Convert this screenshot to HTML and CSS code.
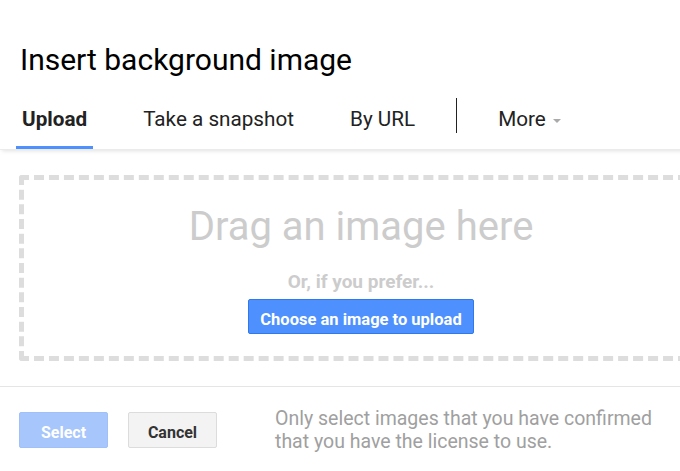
FILE: index.html
```html
<!DOCTYPE html>
<html lang="en">
<head>
    <meta charset="UTF-8">
    <meta name="viewport" content="width=device-width, initial-scale=1.0">
    <title>Insert background image</title>
    <link rel="stylesheet" href="styles.css">
</head>
<body>

<div class="dialog">
    <h1 class="title">Insert background image</h1>

    <!-- Tabs -->
    <div class="tabs">
        <div class="tab active">Upload</div>
        <div class="tab">Take a snapshot</div>
        <div class="tab">By URL</div>
        <div class="tab-divider"></div>
        <div class="tab more">More <span class="caret"></span></div>
    </div>

    <!-- Upload area -->
    <div class="content">
        <div class="dropzone">
            <div class="drop-title">Drag an image here</div>
            <div class="drop-sub">Or, if you prefer...</div>
            <button class="btn-choose">Choose an image to upload</button>
        </div>
    </div>

    <div class="footer">
        <button class="btn btn-select" disabled>Select</button>
        <button class="btn btn-cancel">Cancel</button>
        <p class="notice">Only select images that you have confirmed<br>that you have the license to use.</p>
    </div>
</div>

</body>
</html>
```

FILE: styles.css
```css
body {
    font-family: Roboto, Arial, sans-serif;
    background-color: #fff;
    margin: 0;
    padding: 0;
    overflow: hidden;
}
.dialog {
    width: 722px;
}
.title {
    font-size: 30px;
    font-weight: normal;
    color: #000;
    margin: 0;
    padding: 41px 20px 0 20px;
    line-height: 38px;
}
.tabs {
    display: flex;
    align-items: center;
    height: 52px;
    margin-top: 18px;
    padding-left: 16px;
    box-shadow: 0 3px 4px -2px rgba(0, 0, 0, 0.12);
    border-bottom: 1px solid #ebebeb;
}
.tab {
    font-size: 20.7px;
    color: #222;
    padding: 0 6px;
    height: 52px;
    line-height: 45px;
    box-sizing: border-box;
    margin-right: 44px;
}
.tab.active {
    font-weight: bold;
    border-bottom: 3px solid #4d90fe;
}
.tab-divider {
    width: 1px;
    height: 35px;
    background-color: #222;
    margin: 1px 35px 0 -9px;
    align-self: flex-start;
}
.caret {
    display: inline-block;
    width: 0;
    height: 0;
    border-left: 4px solid transparent;
    border-right: 4px solid transparent;
    border-top: 4px solid #aaa;
    vertical-align: middle;
    margin-left: 2px;
}
.content {
    padding: 25px 19px 0 19px;
}
.dropzone {
    border: 5px dashed #ddd;
    border-radius: 3px;
    height: 176px;
    display: flex;
    flex-direction: column;
    align-items: center;
}
.drop-title {
    font-size: 40px;
    color: #ccc;
    margin-top: 23px;
    line-height: 48px;
}
.drop-sub {
    font-size: 19px;
    font-weight: bold;
    color: #ccc;
    margin-top: 19px;
}
.btn-choose {
    margin-top: 6px;
    height: 35px;
    padding: 5px 11px 0 11px;
    font-family: Roboto, Arial, sans-serif;
    font-size: 16.5px;
    font-weight: bold;
    color: #fff;
    background-color: #4d90fe;
    border: 1px solid #3079ed;
    border-radius: 2px;
}
.footer {
    display: flex;
    align-items: flex-start;
    margin-top: 25px;
    border-top: 1px solid #e5e5e5;
    padding: 25px 19px 0 19px;
}
.btn {
    width: 89px;
    height: 36px;
    padding-top: 6px;
    font-family: Roboto, Arial, sans-serif;
    font-size: 16px;
    font-weight: bold;
    border-radius: 2px;
}
.btn-select {
    color: #fff;
    background-color: #a6c6fc;
    border: 1px solid #9fc0f8;
    margin-right: 20px;
}
.btn-cancel {
    color: #333;
    background-color: #f3f3f3;
    border: 1px solid #dcdcdc;
}
.notice {
    margin: -5px 0 0 58px;
    font-size: 19.5px;
    line-height: 23px;
    color: #a0a0a0;
}
```
